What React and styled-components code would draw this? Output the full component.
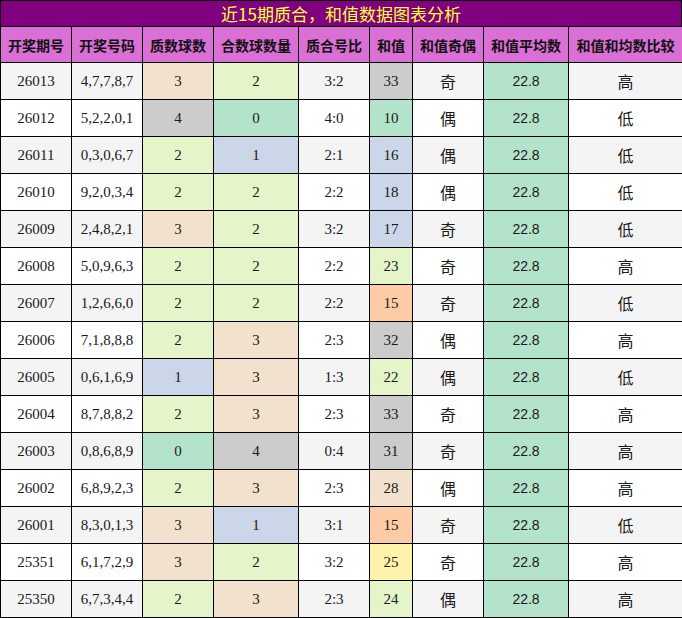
import React from "react";
import styled, { createGlobalStyle } from "styled-components";

const Global = createGlobalStyle`
  body {
    margin: 0;
    background: #fff;
    font-family: "Liberation Serif", "Noto Sans CJK SC", serif;
  }
`;

const Wrap = styled.div`
  width: 682px;
`;

const Title = styled.div`
  height: 25px;
  border: 1px solid #000;
  border-bottom: none;
  background: #800080;
  color: #ffff33;
  font-family: "Noto Sans CJK SC", sans-serif;
  font-size: 17px;
  line-height: 25px;
  text-align: center;
`;

const Table = styled.table`
  width: 682px;
  border-collapse: collapse;
  table-layout: fixed;
`;

const Th = styled.th`
  height: 35px;
  padding: 0;
  border: 1px solid #000;
  background: #da6fd5;
  color: #111;
  font-family: "Noto Sans CJK SC", sans-serif;
  font-size: 14px;
  font-weight: bold;
  text-align: center;
`;

const tones = {
  mint: "#b4e3cc",
  blue: "#cbd6e8",
  green: "#e5f5c9",
  beige: "#f2e2cd",
  gray: "#cccccc",
  orange: "#fdcca6",
  yellow: "#fff2ab",
};

const fonts = {
  serif: '"Liberation Serif", serif',
  sans: '"Liberation Sans", sans-serif',
  cjk: '"Noto Sans CJK SC", sans-serif',
};

const sizes = { serif: "15px", sans: "14px", cjk: "16px" };

const Tr = styled.tr`
  background: ${(p) => (p.$odd ? "#f4f4f4" : "#ffffff")};
`;

const Td = styled.td`
  height: 36px;
  padding: 0;
  border: 1px solid #000;
  text-align: center;
  color: #1a1a1a;
  font-family: ${(p) => fonts[p.$font || "serif"]};
  font-size: ${(p) => sizes[p.$font || "serif"]};
  background: ${(p) => (p.$tone ? tones[p.$tone] : "transparent")};
`;

const countTone = ["mint", "blue", "green", "beige", "gray"];

const sumTone = (s) => {
  if (s <= 10) return "mint";
  if (s === 15) return "orange";
  if (s <= 18) return "blue";
  if (s <= 24) return "green";
  if (s === 25) return "yellow";
  if (s <= 28) return "beige";
  return "gray";
};

const rows = [
  ["26013", "4,7,7,8,7", 3, 2, 33, "奇", "高"],
  ["26012", "5,2,2,0,1", 4, 0, 10, "偶", "低"],
  ["26011", "0,3,0,6,7", 2, 1, 16, "偶", "低"],
  ["26010", "9,2,0,3,4", 2, 2, 18, "偶", "低"],
  ["26009", "2,4,8,2,1", 3, 2, 17, "奇", "低"],
  ["26008", "5,0,9,6,3", 2, 2, 23, "奇", "高"],
  ["26007", "1,2,6,6,0", 2, 2, 15, "奇", "低"],
  ["26006", "7,1,8,8,8", 2, 3, 32, "偶", "高"],
  ["26005", "0,6,1,6,9", 1, 3, 22, "偶", "低"],
  ["26004", "8,7,8,8,2", 2, 3, 33, "奇", "高"],
  ["26003", "0,8,6,8,9", 0, 4, 31, "奇", "高"],
  ["26002", "6,8,9,2,3", 2, 3, 28, "偶", "高"],
  ["26001", "8,3,0,1,3", 3, 1, 15, "奇", "低"],
  ["25351", "6,1,7,2,9", 3, 2, 25, "奇", "高"],
  ["25350", "6,7,3,4,4", 2, 3, 24, "偶", "高"],
];

const heads = [
  ["开奖期号", 71],
  ["开奖号码", 71],
  ["质数球数", 71],
  ["合数球数量", 85],
  ["质合号比", 71],
  ["和值", 43],
  ["和值奇偶", 71],
  ["和值平均数", 85],
  ["和值和均数比较", 114],
];

export default function App() {
  return (
    <Wrap>
      <Global />
      <Title>近15期质合，和值数据图表分析</Title>
      <Table>
        <colgroup>
          {heads.map(([h, w]) => (
            <col key={h} style={{ width: w }} />
          ))}
        </colgroup>
        <thead>
          <tr>
            {heads.map(([h]) => (
              <Th key={h}>{h}</Th>
            ))}
          </tr>
        </thead>
        <tbody>
          {rows.map(([issue, nums, zhi, he, sum, parity, cmp], i) => (
            <Tr key={issue} $odd={i % 2 === 0}>
              <Td>{issue}</Td>
              <Td>{nums}</Td>
              <Td $tone={countTone[zhi]}>{zhi}</Td>
              <Td $tone={countTone[he]}>{he}</Td>
              <Td>
                {zhi}:{he}
              </Td>
              <Td $tone={sumTone(sum)}>{sum}</Td>
              <Td $font="cjk">{parity}</Td>
              <Td $font="sans" $tone="mint">
                22.8
              </Td>
              <Td $font="cjk">{cmp}</Td>
            </Tr>
          ))}
        </tbody>
      </Table>
    </Wrap>
  );
}
